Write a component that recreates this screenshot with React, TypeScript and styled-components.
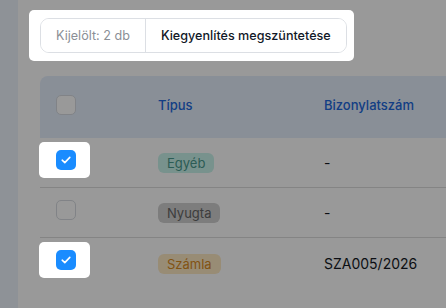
import styled, { createGlobalStyle } from "styled-components";

const GlobalStyle = createGlobalStyle`
  html, body {
    margin: 0;
    padding: 0;
    background: #ffffff;
    font-family: Inter, "Liberation Sans", sans-serif;
  }
`

const Page = styled.div`
  display: flex;
  width: 446px;
  height: 308px;
  overflow: hidden;
`

const Sidebar = styled.aside`
  width: 18px;
  flex: none;
  background: #edf3fc;
`

const Main = styled.main`
  flex: 1;
  padding: 10px 0 0 11px;
  min-width: 0;
`

// dims everything that is not part of the current tour step
const Overlay = styled.div`
  position: fixed;
  inset: 0;
  background: rgba(0, 0, 0, 0.4);
  z-index: 1;
`

const Spotlight = styled.div`
  position: relative;
  z-index: 2;
  display: inline-flex;
  background: #ffffff;
  border-radius: 5px;
  padding: 8px 7px 8px 11px;
`

const ButtonGroup = styled.div`
  display: flex;
  height: 35px;
  border: 1px solid #dcdfe4;
  border-radius: 9px;
  box-sizing: border-box;
  overflow: hidden;
`

const Segment = styled.button<{ $muted?: boolean }>`
  display: flex;
  align-items: center;
  padding: 0 15px;
  border: none;
  background: #ffffff;
  font-family: inherit;
  font-size: 12.6px;
  font-weight: ${p => p.$muted ? 400 : 500};
  color: ${p => p.$muted ? "#8b8f96" : "#111827"};
  & + & {
    border-left: 1px solid #dcdfe4;
  }
`

const Table = styled.div`
  margin: 15px 0 0 11px;
  width: 560px;
`

const Row = styled.div<{ $head?: boolean }>`
  display: grid;
  grid-template-columns: 118px 166px 1fr;
  align-items: center;
  height: ${p => p.$head ? "62px" : "50px"};
  background: ${p => p.$head ? "#e4eefc" : "transparent"};
  border-top-left-radius: ${p => p.$head ? "8px" : "0"};
  border-bottom: ${p => p.$head ? "none" : "1px solid #dcdcdc"};
  padding-bottom: ${p => p.$head ? "4px" : "0"};
  box-sizing: border-box;
  &:last-child {
    border-bottom: none;
  }
`

const HeadCell = styled.div`
  font-size: 13px;
  font-weight: 500;
  color: #2168dc;
`

const CheckCell = styled.div<{ $lit?: boolean; $head?: boolean }>`
  position: relative;
  z-index: ${p => p.$lit ? 2 : "auto"};
  justify-self: start;
  display: flex;
  margin: 0 0 ${p => p.$head ? "0" : "6px"} -1px;
  padding: 8px 14px 8px 17px;
  border-radius: 5px;
  background: ${p => p.$lit ? "#ffffff" : "transparent"};
`

const Box = styled.span<{ $checked?: boolean }>`
  display: flex;
  align-items: center;
  justify-content: center;
  width: 20px;
  height: 20px;
  box-sizing: border-box;
  border-radius: 5px;
  background: ${p => p.$checked ? "#1a8cff" : "#ffffff"};
  border: ${p => p.$checked ? "none" : "1px solid #d7dbe1"};
`

const Badge = styled.span<{ $bg: string; $fg: string }>`
  justify-self: start;
  display: inline-flex;
  align-items: center;
  height: 20px;
  padding: 0 9px;
  border-radius: 6px;
  font-size: 13px;
  background: ${p => p.$bg};
  color: ${p => p.$fg};
`

const Cell = styled.div`
  font-size: 14px;
  color: #151a24;
`

const types: Record<string, { bg: string; fg: string }> = {
  "Egyéb": { bg: "#c9f3eb", fg: "#4a9a8e" },
  "Nyugta": { bg: "#d0d0d0", fg: "#666666" },
  "Számla": { bg: "#fde9c4", fg: "#d98a1e" },
}

const rows = [
  { checked: true, type: "Egyéb", number: "-" },
  { checked: false, type: "Nyugta", number: "-" },
  { checked: true, type: "Számla", number: "SZA005/2026" },
]

const Check = () => (
  <svg width="10" height="8" viewBox="0 0 10 8" fill="none">
    <path d="M1.2 4.2 3.8 6.6 8.8 1.4" stroke="#ffffff" strokeWidth="1.6" strokeLinecap="round" strokeLinejoin="round" />
  </svg>
)

const App = () => {
  return (
    <>
      <GlobalStyle />
      <Page>
        <Sidebar />
        <Main>
          <Spotlight>
            <ButtonGroup>
              <Segment $muted>Kijelölt: 2 db</Segment>
              <Segment>Kiegyenlítés megszüntetése</Segment>
            </ButtonGroup>
          </Spotlight>
          <Table>
            <Row $head>
              <CheckCell $head>
                <Box />
              </CheckCell>
              <HeadCell>Típus</HeadCell>
              <HeadCell>Bizonylatszám</HeadCell>
            </Row>
            {rows.map((row, index) => (
              <Row key={index}>
                <CheckCell $lit={row.checked}>
                  <Box $checked={row.checked}>{row.checked && <Check />}</Box>
                </CheckCell>
                <div>
                  <Badge $bg={types[row.type].bg} $fg={types[row.type].fg}>{row.type}</Badge>
                </div>
                <Cell>{row.number}</Cell>
              </Row>
            ))}
          </Table>
        </Main>
        <Overlay />
      </Page>
    </>
  )
}

export default App;
